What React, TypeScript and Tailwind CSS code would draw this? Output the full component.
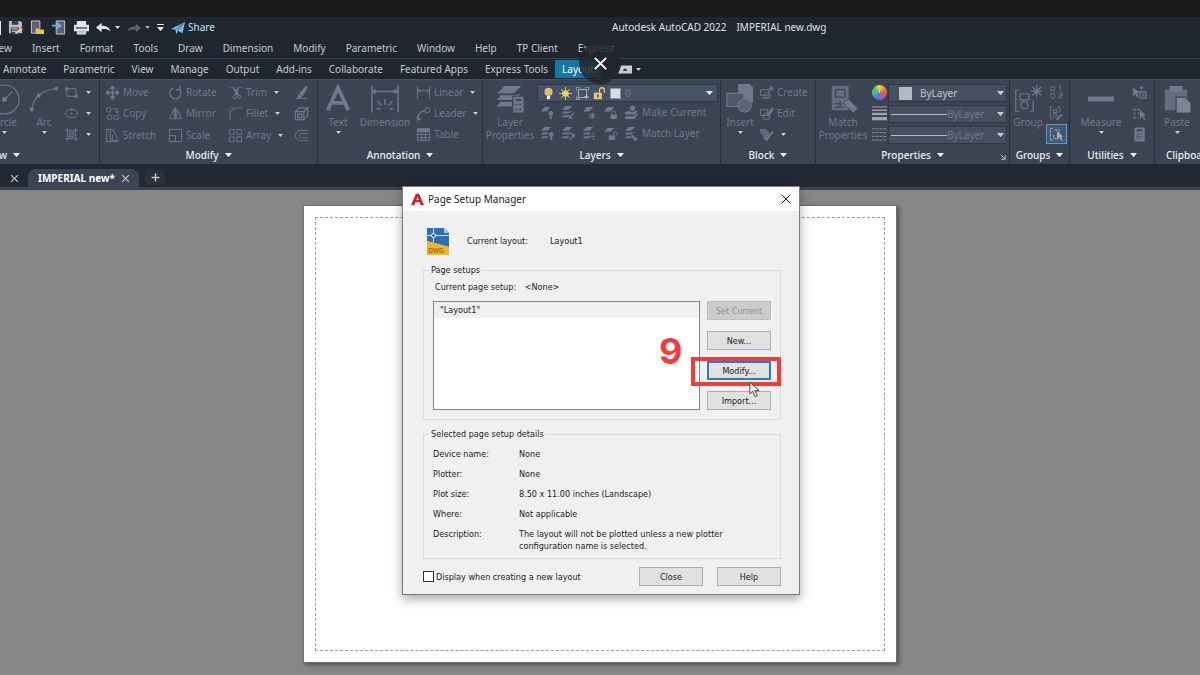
import type { ReactNode } from 'react'

const menus = ['View', 'Insert', 'Format', 'Tools', 'Draw', 'Dimension', 'Modify', 'Parametric', 'Window', 'Help', 'TP Client', 'Express']
const ribbonTabs = ['Annotate', 'Parametric', 'View', 'Manage', 'Output', 'Add-ins', 'Collaborate', 'Featured Apps', 'Express Tools']

const details = [
  { label: 'Device name:', value: 'None' },
  { label: 'Plotter:', value: 'None' },
  { label: 'Plot size:', value: '8.50 x 11.00 inches (Landscape)' },
  { label: 'Where:', value: 'Not applicable' },
  { label: 'Description:', value: 'The layout will not be plotted unless a new plotter configuration name is selected.' },
]

/* ---------- icons ---------- */

function Icon({ children, className = 'size-[15px]' }: { children: ReactNode; className?: string }) {
  return (
    <svg viewBox="0 0 16 16" fill="none" stroke="currentColor" className={`shrink-0 ${className}`} aria-hidden="true">
      {children}
    </svg>
  )
}

function Caret({ className = 'w-[5px] text-[#c9cdd4]' }: { className?: string }) {
  return (
    <svg viewBox="0 0 10 6" className={`shrink-0 ${className}`} aria-hidden="true">
      <path d="M0 0h10L5 6z" fill="currentColor" />
    </svg>
  )
}

const icons = {
  rect: <Icon><path d="M3 4h10v8H3z" /><path d="M1.500 2.500h3v3h-3zM11.500 10.500h3v3h-3z" fill="currentColor" stroke="none" /></Icon>,
  ellipse: <Icon><ellipse cx="8" cy="8" rx="6.500" ry="4.500" /><path d="M7 8h2M8 2.500v2M14 7v2" strokeWidth="1.500" /></Icon>,
  hatch: <Icon><path d="M3.500 1v14M12.500 1v14M1 3.500h14M1 12.500h14M6 6h4v4H6zM4 8l4-4M4 12l8-8M8 12l4-4" /></Icon>,
  move: <Icon><path d="M8 2v12M2 8h12M5.500 4L8 1.500 10.500 4M5.500 12L8 14.500l2.500-2.500M4 5.500L1.500 8 4 10.500M12 5.500L14.500 8 12 10.500" strokeWidth="1.600" /></Icon>,
  copy: <Icon><circle cx="4" cy="4" r="2.500" /><circle cx="5" cy="12" r="2.500" /><circle cx="12" cy="12" r="2.500" /><path d="M8.500 3h4.500v4M11 5.500l2 2 2-2" /></Icon>,
  stretch: <Icon><path d="M1.500 1.500h4v13h-4zM5.500 1.500h3l6 13h-9M8 7v6M6.500 11.500L8 13.500h4M10.500 12l2 1.500-2 1.500" /></Icon>,
  rotate: <Icon><path d="M11.500 4A6 6 0 1 1 6 3M12.500 1v4h-4" strokeWidth="1.400" /></Icon>,
  mirror: <Icon><path d="M6.500 3v10.500H1.500zM9.500 3v10.500h5zM8 1v14" /></Icon>,
  scale: <Icon><path d="M1.500 1.500h13v13h-13zM1.500 8h6.500v6.500" /></Icon>,
  trim: <Icon><path d="M1 2.500h6M10 2.500h5" strokeDasharray="2 1" /><path d="M6 3l5 8M11 3L8 11" strokeWidth="1.800" /><circle cx="7" cy="13" r="1.700" /><circle cx="12" cy="12.500" r="1.700" /></Icon>,
  fillet: <Icon><path d="M2 15V10a8 8 0 0 1 8-8h5" /><path d="M1 6V3M3 1.500h3" strokeDasharray="1 1" /></Icon>,
  array: <Icon><path d="M1.500 1.500h5v5h-5zM9.500 1.500h5v5h-5zM1.500 9.500h5v5h-5zM9.500 9.500h5v5h-5z" /></Icon>,
  erase: <Icon><path d="M6 9l7-8 1.500 1.500L9 11.500z" fill="currentColor" /><path d="M5 10l3 2.500-4 2z" fill="currentColor" /><path d="M2 14.500h12" /></Icon>,
  explode: <Icon><path d="M1.500 6h9v8.500h-9zM1.500 6l4-4h9l-4 4M14.500 2v8.500l-4 4M4 8.500h4v4H4z" strokeWidth="1.300" /></Icon>,
  offset: <Icon><path d="M15 2.500H7a5.500 5.500 0 0 0 0 11h8M15 6H8a2 2 0 0 0 0 4.500h7" /></Icon>,
  linear: <Icon><path d="M1.500 1v14M14.500 1v14M2 6h12M4.500 4L2 6l2.500 2M11.500 4L14 6l-2.500 2" /></Icon>,
  leader: <Icon><path d="M2 14c0-5 2-8 7-9M1 11l1 4 3-2" strokeWidth="1.300" /><circle cx="12" cy="4.500" r="2.700" /></Icon>,
  table: <Icon><path d="M1.500 2h13v12.500h-13zM1.500 8h13M1.500 11.500h13M6 5v9.500M10 5v9.500" /><path d="M1.500 2h13v3h-13z" fill="currentColor" /></Icon>,
  layerOff: <Icon><path d="M1 7l4-5h6L7 7z" fill="currentColor" stroke="none" /><circle cx="11.500" cy="9" r="2.500" fill="currentColor" stroke="none" /><path d="M11.500 11v4" strokeWidth="2" /></Icon>,
  layerIso: <Icon><path d="M1 5l4-4h7L8 5zM1 9l1.500-2H12L8 9zM1 13l1.500-2H9l-2 2z" fill="currentColor" stroke="none" /><path d="M14 8l-5 6M9 10.500V14h3.500" strokeWidth="1.300" /></Icon>,
  layerFreeze: <Icon><path d="M1 7l4-5h7L8 7z" fill="currentColor" stroke="none" /><path d="M11 8v7M7.800 9.500l6.400 4M14.200 9.500l-6.400 4" strokeWidth="1.300" /></Icon>,
  layerLock: <Icon><path d="M1 7l4-5h7L8 7zM8 10h7v5H8z" fill="currentColor" stroke="none" /><path d="M9.500 10V8.500a2 2 0 0 1 4 0V10" /></Icon>,
  layerCurrent: <Icon><path d="M1 8l3-2 5 2 4-2h2l-4 4H1zM1 12h9l3-3h2l-4 6H1z" fill="currentColor" stroke="none" /><circle cx="9" cy="3.500" r="2.800" fill="currentColor" stroke="none" /></Icon>,
  layerOn: <Icon><path d="M1 5l4-4h7L8 5zM1 9l1.500-2H9L8 9zM1 13l1.500-2H9l-1 2z" fill="currentColor" stroke="none" /><circle cx="12" cy="9" r="2.500" fill="currentColor" stroke="none" /><path d="M12 11v4" strokeWidth="2" /></Icon>,
  layerUniso: <Icon><path d="M1 5l4-4h7L8 5zM1 9l1.500-2H12L8 9zM1 13l1.500-2H9l-2 2z" fill="currentColor" stroke="none" /><path d="M9 15l5-6M10.500 9H14v3.500" strokeWidth="1.300" /></Icon>,
  layerThaw: <Icon><path d="M1 5l4-4h7L8 5zM1 9l1.500-2H9L8 9zM1 13l1.500-2H9l-1 2z" fill="currentColor" stroke="none" /><path d="M12 7v8M9 11h6" strokeWidth="1.300" strokeDasharray="2 1" /></Icon>,
  layerUnlock: <Icon><path d="M1 6l4-4h7L8 6zM6 10h7v5H6z" fill="currentColor" stroke="none" /><path d="M11 10V8.500a2 2 0 0 1 4 0V10" /></Icon>,
  layerMatch: <Icon><path d="M1 5l4-4h7L8 5zM1 9l1.500-2H12L8 9zM1 13l1.500-2H8l-1 2z" fill="currentColor" stroke="none" /><path d="M8 9l7 5-3 2-4-4z" fill="currentColor" stroke="none" /></Icon>,
  create: <Icon><path d="M1.500 5h9v6h-9zM2 14h9" /><circle cx="9" cy="11" r="3" /><path d="M13 1v6M10 4h6M11 2l4 4M15 2l-4 4" /></Icon>,
  edit: <Icon><path d="M1.500 4h8v6h-8z" /><circle cx="8" cy="11" r="3.500" /><path d="M9 9l5-7 1.500 1.500-5 7z" fill="currentColor" /></Icon>,
  attribs: <Icon><path d="M1 2h6l6 6-5 5-7-7z" fill="currentColor" stroke="none" opacity=".7" /><path d="M5 11l3 3 7-9" strokeWidth="2" /></Icon>,
  ungroup: <Icon><path d="M2 2h4v4H2zM12 1v5M10.500 2L12 1M11 9h3v2.500h-3V14h3" /><circle cx="4" cy="11.500" r="2.500" /></Icon>,
  groupEdit: <Icon><path d="M4 1H1.500v13H4M9 1h2.500v6M4.500 4h4v3h-4z" /><circle cx="6.500" cy="10" r="2" /><path d="M8 15l6-6" strokeWidth="2" /></Icon>,
  groupSelect: <Icon><path d="M4 1.500H1.500v13H4M6 3h5v3M5 8.500v4h3" strokeDasharray="3 1" /><path d="M8.500 4v10l2.500-3 2 4 1.500-1-2-3.500H15z" fill="currentColor" stroke="none" /></Icon>,
  quickSelect: <Icon><path d="M1 2v10l2.500-2.500 2 4 1.500-1L5.500 8.500H9z" fill="currentColor" stroke="none" /><path d="M8.500 7h6.500v7H8.500zM10.500 9.500h3M10.500 11.500h3M10 1v4M8 3h4" strokeWidth="1.300" /></Icon>,
  selectAll: <Icon><path d="M1 4h9M1 13h6M3 2v12M7 2v8" strokeDasharray="3 1" /><path d="M8.500 4v10l2.500-3 2 4 1.500-1-2-3.500H15z" fill="currentColor" stroke="none" /></Icon>,
  calc: <Icon><path d="M3 1h10v14H3z" fill="currentColor" /><path d="M5 3.500h6" stroke="#3b4453" strokeWidth="2" /><path d="M5 7.500h6M5 10h6M5 12.500h6" stroke="#3b4453" strokeDasharray="1.500 .8" /></Icon>,
}

/* ---------- ribbon pieces ---------- */

function Panel({ title, className, children }: { title: string; className: string; children: ReactNode }) {
  return (
    <section className={`flex flex-col shrink-0 border-r border-[#272d39] ${className}`}>
      <div className="flex flex-1 pt-0.5">{children}</div>
      <button className="flex h-[18px] w-full items-center justify-center gap-1.5 font-medium whitespace-nowrap text-[#eceef1]">
        {title}
        <Caret className="w-[7px] text-[#eceef1]" />
      </button>
    </section>
  )
}

function Tool({ icon, label, caret }: { icon: ReactNode; label?: string; caret?: boolean }) {
  return (
    <button className="flex h-[21px] items-center gap-[3px] whitespace-nowrap" aria-label={label ?? 'Tool'}>
      {icon}
      {label}
      {caret && <Caret className="ml-1 w-[5px] text-[#c9cdd4]" />}
    </button>
  )
}

function BigTool({ icon, label, caret, className }: { icon: ReactNode; label: string; caret?: boolean; className: string }) {
  return (
    <button className={`flex flex-col items-center shrink-0 leading-[13px] ${className}`}>
      <span className="flex h-[34px] items-center justify-center">{icon}</span>
      <span>{label}</span>
      {caret && <Caret className="mt-0.5 w-[5px] text-[#c9cdd4]" />}
    </button>
  )
}

function QuickAccess() {
  return (
    <div className="flex items-center gap-[7px] text-[#e3e5e8]">
      <span className="h-3.5 w-px bg-[#e3e5e8]" />
      <button aria-label="Save as">
        <Icon className="size-[15px]">
          <path d="M1 1h12l2 2v11H1z" fill="#b9bdc4" stroke="none" />
          <path d="M4 1h7v4H4zM3 8h9v6H3z" fill="#3a404b" stroke="none" />
          <path d="M4 9.500h6M4 12h5" stroke="#e3e5e8" />
          <path d="M7 14l6-6 2.500 2-6 5z" fill="#f0c987" stroke="none" />
          <path d="M13 8l1-1 2 2-.5 1z" fill="#d9534f" stroke="none" />
        </Icon>
      </button>
      <button aria-label="Open from web">
        <Icon className="size-[15px]">
          <path d="M1.500 1h9v13h-9z" fill="#5b626e" stroke="#c9ccd1" />
          <path d="M6 9h3l1 1h5v5H6z" fill="#e9bf62" stroke="none" />
        </Icon>
      </button>
      <button aria-label="Save to web">
        <Icon className="size-[15px]">
          <path d="M4.500 1h9v14h-9z" fill="#5b626e" stroke="#c9ccd1" />
          <path d="M0 6h7M5 3l4 3-4 3" stroke="#6cb4ee" strokeWidth="2" />
        </Icon>
      </button>
      <button aria-label="Plot">
        <Icon className="size-[15px]">
          <path d="M3 1h10v4H3zM0 5h16v7H0z" fill="#e3e5e8" stroke="none" />
          <path d="M2 8.500h12" stroke="#4a515e" strokeWidth="1.500" />
          <path d="M3.500 10.500h9v4.500h-9z" fill="#9bd0f0" stroke="#e3e5e8" />
        </Icon>
      </button>
      <button aria-label="Undo" className="flex items-center gap-1">
        <Icon className="size-[15px]"><path d="M0 8l6-5v3.200c5 0 8 1.500 9.500 5.800C13 9.800 10 9.500 6 9.700V13z" fill="currentColor" stroke="none" /></Icon>
        <Caret className="w-[5px] text-[#e3e5e8]" />
      </button>
      <button aria-label="Redo" className="flex items-center gap-1 text-[#5b616c]">
        <Icon className="size-[14px]"><path d="M16 8l-6-5v3.200c-5 0-8 1.500-9.500 5.800C3 9.800 6 9.500 10 9.700V13z" fill="currentColor" stroke="none" /></Icon>
        <Caret className="w-[5px] text-[#a3a8b1]" />
      </button>
      <button aria-label="Customize" className="flex flex-col items-center gap-0.5">
        <span className="h-px w-[7px] bg-[#e3e5e8]" />
        <Caret className="w-[7px] text-[#e3e5e8]" />
      </button>
      <a href="#share" className="flex items-center gap-[3px] text-[#b9e3fb]">
        <Icon className="size-[14px]"><path d="M0 9L16 1l-3 13-5-3-2 4-1-5z" fill="#7cc0f2" stroke="none" /><path d="M5 10l9-7-6 8" stroke="#2a5f8c" /></Icon>
        Share
      </a>
    </div>
  )
}

function LineCombo({ name }: { name: string }) {
  return (
    <div className="flex h-[18px] items-center border border-[#2f3644] bg-[#464f60] pr-0.5">
      <span className="ml-0.5 h-px w-14 bg-[#b6bac2]" />
      <select aria-label={name} className="min-w-0 flex-1 appearance-none">
        <option>ByLayer</option>
      </select>
      <Caret className="w-[7px] text-[#c9cdd4]" />
    </div>
  )
}

function Ribbon() {
  return (
    <div className="flex h-[85px] overflow-hidden border-t border-[#4a5262] bg-[#3b4453] text-[#70788a]">
      <Panel title="Draw" className="-ml-8 w-[132px] [&>button]:justify-start [&>button]:pl-3.5">
        <BigTool className="ml-5 w-8" caret label="Circle" icon={
          <Icon className="size-[31px]"><circle cx="8" cy="8" r="7.500" strokeWidth=".6" /><path d="M8 8l4-4" strokeWidth=".6" /><circle cx="8" cy="8" r=".8" fill="currentColor" /></Icon>
        } />
        <BigTool className="ml-2 w-8" caret label="Arc" icon={
          <Icon className="size-[28px]"><path d="M1 14C2 7 6 3 15 2" strokeWidth=".6" /><path d="M0 13h2v2H0zM4 5h2v2H4zM14 1h2v2h-2z" fill="currentColor" stroke="none" /></Icon>
        } />
        <div className="ml-1">
          <Tool icon={icons.rect} caret />
          <Tool icon={icons.ellipse} caret />
          <Tool icon={icons.hatch} caret />
        </div>
      </Panel>

      <Panel title="Modify" className="w-[218px]">
        <div className="grid grid-cols-[63px_60px_66px_15px] pl-[5px]">
          <Tool icon={icons.move} label="Move" />
          <Tool icon={icons.rotate} label="Rotate" />
          <Tool icon={icons.trim} label="Trim" caret />
          <Tool icon={icons.erase} />
          <Tool icon={icons.copy} label="Copy" />
          <Tool icon={icons.mirror} label="Mirror" />
          <Tool icon={icons.fillet} label="Fillet" caret />
          <Tool icon={icons.explode} />
          <Tool icon={icons.stretch} label="Stretch" />
          <Tool icon={icons.scale} label="Scale" />
          <Tool icon={icons.array} label="Array" caret />
          <Tool icon={icons.offset} />
        </div>
      </Panel>

      <Panel title="Annotation" className="w-[165px]">
        <BigTool className="w-10" caret label="Text" icon={
          <Icon className="size-[30px]"><path d="M2.500 14L8 2l5.500 12M4.500 10h7" strokeWidth="2" /></Icon>
        } />
        <BigTool className="w-[54px]" label="Dimension" icon={
          <Icon className="size-[30px]"><path d="M1 1v14M15 1v14M1.500 4h13M3 3L1.500 4 3 5M13 3l1.500 1L13 5M8 8v3M4 9l2 2.500M12 9l-2 2.500M3.500 13l2 .5M12.500 13l-2 .5" strokeWidth=".8" /></Icon>
        } />
        <div className="ml-1">
          <Tool icon={icons.linear} label="Linear" caret />
          <Tool icon={icons.leader} label="Leader" caret />
          <Tool icon={icons.table} label="Table" />
        </div>
      </Panel>

      <Panel title="Layers" className="w-[238px]">
        <BigTool className="w-[54px]" label="Layer Properties" icon={
          <Icon className="size-[30px]"><path d="M1 5l4-4h9l-4 4zM1 8.500L3 6h8l3-1-4 3.500zM1 12l2-2.500h6V12z" fill="currentColor" stroke="none" /><path d="M9.500 6.500h6v9h-6z" fill="currentColor" stroke="#3b4453" strokeWidth=".6" /><path d="M11 8.500h3M11 11h1M13 11h1M11 13.500h1M13 13.500h1" stroke="#3b4453" /></Icon>
        } />
        <div className="mr-0.5 min-w-0 flex-1">
          <div className="mt-0.5 flex h-[18px] items-center gap-1 border border-[#2f3644] bg-[#465267] px-1">
            <Icon className="size-[13px]"><circle cx="8" cy="6" r="5" fill="#e9b877" stroke="none" /><path d="M6 11h4v4H6z" fill="#e6e6e6" stroke="none" /></Icon>
            <Icon className="size-[13px]"><circle cx="8" cy="8" r="4" fill="#f2cf63" stroke="none" /><path d="M8 0v16M0 8h16M2.500 2.500l11 11M13.500 2.500l-11 11" stroke="#f2cf63" /></Icon>
            <Icon className="size-[13px]"><path d="M3 3h10v10H3z" stroke="#c9ced6" /><path d="M0 5V0h5M11 0h5v5M0 11v4h5M13 9v6M10 12h6" stroke="#c9ced6" /></Icon>
            <Icon className="size-[13px]"><path d="M1 7h10v8H1z" fill="#e6c777" stroke="none" /><path d="M8 7V4a3 3 0 0 1 6 0v3" stroke="#e6c777" strokeWidth="1.700" /><path d="M6 9v4" stroke="#465267" strokeWidth="1.700" /></Icon>
            <span className="size-[11px] border border-[#8e95a1] bg-[#dadce2]" />
            <select aria-label="Layer" className="min-w-0 flex-1 appearance-none">
              <option>0</option>
            </select>
            <Caret className="w-[7px] text-[#dfe2e6]" />
          </div>
          <div className="flex gap-1.5 pl-[3px]">
            <Tool icon={icons.layerOff} />
            <Tool icon={icons.layerIso} />
            <Tool icon={icons.layerFreeze} />
            <Tool icon={icons.layerLock} />
            <Tool icon={icons.layerCurrent} label="Make Current" />
          </div>
          <div className="flex gap-1.5 pl-[3px]">
            <Tool icon={icons.layerOn} />
            <Tool icon={icons.layerUniso} />
            <Tool icon={icons.layerThaw} />
            <Tool icon={icons.layerUnlock} />
            <Tool icon={icons.layerMatch} label="Match Layer" />
          </div>
        </div>
      </Panel>

      <Panel title="Block" className="w-[95px]">
        <BigTool className="w-[38px]" caret label="Insert" icon={
          <Icon className="size-[30px]"><path d="M7 0h6l2 2v8H7z" fill="currentColor" stroke="none" /><path d="M1 5h9v7H1z" fill="#4f586a" strokeWidth=".6" /><circle cx="10.500" cy="11.500" r="3.500" fill="#5a6375" strokeWidth=".6" /></Icon>
        } />
        <div>
          <Tool icon={icons.create} label="Create" />
          <Tool icon={icons.edit} label="Edit" />
          <Tool icon={icons.attribs} caret />
        </div>
      </Panel>

      <Panel title="Properties" className="w-[194px]">
        <BigTool className="w-[54px]" label="Match Properties" icon={
          <Icon className="size-[30px]"><path d="M2 1h9v13H2z" fill="#656d7e" stroke="none" /><path d="M4 3h5v4H4zM3.500 10.500h3M6.500 9v3M3.500 12.500h5" strokeWidth=".7" stroke="#3b4453" /><path d="M8 10l3-2 5 5-2.500 2.500z" fill="currentColor" stroke="#3b4453" strokeWidth=".4" /></Icon>
        } />
        <div className="flex w-[18px] flex-col items-center">
          <span className="flex h-[21px] items-center">
            <span className="size-[15px] rounded-full bg-[conic-gradient(#f0d545,#f08a3c,#e0524d,#b45ac0,#4a74e0,#3fb8d8,#56c264,#f0d545)]" />
          </span>
          <span className="flex h-[21px] items-center text-[#9da3ae]"><Icon><path d="M0 1h16" /><path d="M0 4.500h16" strokeWidth="1.500" /><path d="M0 8.500h16" strokeWidth="2.500" /><path d="M0 13.500h16" strokeWidth="3.500" /></Icon></span>
          <span className="flex h-[21px] items-center text-[#8d94a1]"><Icon><path d="M0 2h16M0 6h16M0 10h16M0 14h16" strokeDasharray="3 1" /></Icon></span>
        </div>
        <div className="flex min-w-0 flex-1 flex-col gap-[3px] pt-0.5 pr-0.5">
          <div className="flex h-[18px] items-center gap-2 border border-[#2f3644] bg-[#464f60] pr-0.5 pl-2.5 text-[#c0c4cc]">
            <span className="size-[13px] bg-[#b4b8c1]" />
            <select aria-label="Object color" className="min-w-0 flex-1 appearance-none">
              <option>ByLayer</option>
            </select>
            <Caret className="w-[7px] text-[#c9cdd4]" />
          </div>
          <LineCombo name="Lineweight" />
          <LineCombo name="Linetype" />
        </div>
        <button aria-label="Properties settings" className="-ml-3 flex w-3 items-end justify-center text-[#c9cdd4] [&>svg]:-mb-3.5">
          <Icon className="size-[6px]"><path d="M2 2l10 10M14 4v10H4" strokeWidth="2.500" /></Icon>
        </button>
      </Panel>

      <Panel title="Groups" className="w-[60px]">
        <BigTool className="w-9" label="Group" icon={
          <Icon className="size-[28px]"><path d="M3 3H1v12h2M9 15h2V9M3.500 5h5v3.500h-5zM13 0v7M9.500 3.500h7M10.500 1l5 5M15.500 1l-5 5" strokeWidth=".7" /><circle cx="6" cy="11.500" r="2" strokeWidth=".7" /></Icon>
        } />
        <div className="flex flex-col items-center">
          <Tool icon={icons.ungroup} />
          <Tool icon={icons.groupEdit} />
          <div className="border border-[#4a9fd4] bg-[#44596f] px-0.5 text-[#a8b0bc] [&>button]:h-[18px]">
            <Tool icon={icons.groupSelect} />
          </div>
        </div>
      </Panel>

      <Panel title="Utilities" className="w-[85px]">
        <BigTool className="w-[62px]" caret label="Measure" icon={
          <Icon className="size-[26px]"><path d="M0 6.500h16v3H0z" fill="currentColor" stroke="none" /></Icon>
        } />
        <div>
          <Tool icon={icons.quickSelect} />
          <Tool icon={icons.selectAll} />
          <Tool icon={icons.calc} />
        </div>
      </Panel>

      <Panel title="Clipboard" className="w-20 [&>button]:justify-start [&>button]:pl-[11px]">
        <BigTool className="w-11" caret label="Paste" icon={
          <Icon className="size-[30px]"><path d="M1.500 3h12v11h-12z" fill="#656d7e" stroke="none" /><path d="M4.500 1.500h6v2.500h-6z" fill="currentColor" /><path d="M7.500 7h5l3 3v5.500h-8z" fill="#7d8594" stroke="#3b4453" strokeWidth=".6" /></Icon>
        } />
      </Panel>
    </div>
  )
}

/* ---------- dialog ---------- */

const dialogButton = 'h-[19px] w-16 border border-[#adadad] bg-[#e1e1e1] text-[#1c1c1c]'

function PageSetupDialog() {
  return (
    <div
      role="dialog"
      aria-labelledby="dialog-title"
      className="absolute top-[186px] left-1/2 w-[398px] -translate-x-[198px] border border-[#7b7b7b] bg-[#f0f0f0] pb-2 font-['DejaVu_Sans_Condensed','DejaVu_Sans',sans-serif] text-[9px] leading-[14px] text-[#1c1c1c] shadow-[0_4px_10px_rgba(0,0,0,0.35)]"
    >
      <header className="flex h-6 items-center bg-white px-2">
        <Icon className="size-[13px]"><path d="M0 15L6 1h4l6 14h-4l-1.300-3.500H5.500L4 15zM6.500 8.500h3.200L8 4.500z" fill="#c0242f" stroke="none" /></Icon>
        <h1 id="dialog-title" className="ml-1 font-['Noto_Sans',sans-serif] text-[10px]">Page Setup Manager</h1>
        <button aria-label="Close dialog" className="ml-auto">
          <Icon className="size-[10px]"><path d="M1 1l14 14M15 1L1 15" strokeWidth="1.600" /></Icon>
        </button>
      </header>

      <div className="pr-[18px] pl-5">
        <div className="flex h-[52px] items-center pt-2 pl-1">
          <svg viewBox="0 0 22 27" className="w-[22px]" aria-hidden="true">
            <path d="M0 0h17l5 5v14L0 13z" fill="#2b6fb5" />
            <path d="M17 0l5 5h-5z" fill="#9cc4e6" />
            <path d="M0 13l22 6v8H0z" fill="#f2b526" />
            <path d="M0 7.500h22M6.500 0v14" stroke="#cfe3f5" />
            <circle cx="6.500" cy="7.500" r="2" fill="#2b6fb5" stroke="#fff" />
            <text x="1" y="25" fontSize="7" fill="#7a5310">DWG</text>
          </svg>
          <span className="ml-[18px] w-[83px]">Current layout:</span>
          <span>Layout1</span>
        </div>

        <fieldset className="border border-[#dcdcdc] px-[9px] pb-[9px]">
          <legend className="-ml-1 px-0.5">Page setups</legend>
          <p className="mt-[3px] mb-[7px] pl-0.5">
            Current page setup: <span className="ml-1.5">&lt;None&gt;</span>
          </p>
          <div className="flex justify-between">
            <ul role="listbox" aria-label="Page setups" className="h-[109px] w-[267px] border border-[#82858b] bg-white">
              <li role="option" aria-selected="true" className="h-4 bg-[#efefef] pl-1.5 leading-4">"Layout1"</li>
            </ul>
            <div className="flex flex-col justify-between">
              <button disabled className="h-[19px] w-16 border border-[#bfbfbf] bg-[#cccccc] text-[#8f8f8f]">Set Current</button>
              <button className={dialogButton}>New...</button>
              <div className="relative">
                <button className="block h-[19px] w-16 border-2 border-[#2a7ac4] bg-[#e1e1e1]">Modify...</button>
                {/* step marker */}
                <span className="pointer-events-none absolute -top-1 -left-4 h-[29px] w-[90px] border-4 border-[#ee3e3e]" />
                <span className="pointer-events-none absolute -top-7 -left-12 font-['Inter',sans-serif] text-4xl leading-9 font-bold text-[#f53b3b]">9</span>
                <svg viewBox="0 0 12 18" className="pointer-events-none absolute top-5 left-[42px] z-10 w-[11px]" aria-hidden="true">
                  <path d="M1 1v13l3-3 2.500 6 2.500-1-2.500-5.500H11z" fill="#fff" stroke="#333" />
                </svg>
              </div>
              <button className={dialogButton}>Import...</button>
            </div>
          </div>
        </fieldset>

        <fieldset className="mt-[7px] border border-[#dcdcdc] px-[9px] pb-1.5">
          <legend className="-ml-1 px-0.5">Selected page setup details</legend>
          <dl className="mt-[7px] grid grid-cols-[86px_1fr] gap-y-2 leading-3">
            {details.map(d => (
              <div key={d.label} className="contents">
                <dt>{d.label}</dt>
                <dd className="max-w-[220px]">{d.value}</dd>
              </div>
            ))}
          </dl>
        </fieldset>

        <footer className="mt-2 flex items-center">
          <input id="show-on-new" type="checkbox" className="size-[11px] appearance-none border border-[#333] bg-white" />
          <label htmlFor="show-on-new" className="ml-0.5">Display when creating a new layout</label>
          <button className={`${dialogButton} ml-auto`}>Close</button>
          <button className={`${dialogButton} ml-3.5`}>Help</button>
        </footer>
      </div>
    </div>
  )
}

export default function App() {
  return (
    <div className="relative flex min-h-screen flex-col overflow-hidden bg-[#868686] font-['Noto_Sans',sans-serif] text-[10px] text-[#c5c9d0]">
      <div className="h-[17px] bg-[#17191b]" />

      <header className="flex h-[21px] items-center bg-[#20262f]">
        <div className="w-[51%]"><QuickAccess /></div>
        <p className="flex gap-2.5 text-[#dfe2e6]">
          <span>Autodesk AutoCAD 2022</span>
          <span>IMPERIAL new.dwg</span>
        </p>
      </header>

      <nav className="-ml-2.5 flex h-[21px] items-center gap-5 border-b border-[#3a414d] bg-[#20262f] whitespace-nowrap">
        {menus.map(m => <a key={m} href="#menu">{m}</a>)}
      </nav>

      <nav className="flex h-5 items-center gap-[17px] bg-[#20262f] pl-[3px] whitespace-nowrap">
        {ribbonTabs.map(t => <a key={t} href="#tab">{t}</a>)}
        <a href="#layout" className="-ml-2.5 flex h-[18px] items-center bg-[#1377a3] px-[7px] text-white">Layout</a>
        <button aria-label="Minimize ribbon" className="flex items-center gap-1">
          <Icon className="size-[14px]"><path d="M3 4h13v9H0z" fill="#c9cdd4" stroke="none" /><path d="M5 10l3-3 3 3z" fill="#20262f" stroke="none" /></Icon>
          <Caret className="w-[5px] text-[#c9cdd4]" />
        </button>
      </nav>

      <Ribbon />

      <div className="flex h-[26px] items-stretch border-b-[3px] border-[#3b4453] bg-[#222834] pt-[5px]">
        <button aria-label="Close tab" className="ml-2.5 w-[18px]"><Icon className="size-[9px]"><path d="M2 2l12 12M14 2L2 14" strokeWidth="2" /></Icon></button>
        <div className="flex w-[111px] items-center gap-1.5 rounded-t-lg bg-[#3b4453] pl-2.5 font-bold whitespace-nowrap text-white">
          IMPERIAL new*
          <button aria-label="Close drawing" className="text-[#c5c9d0]"><Icon className="size-[9px]"><path d="M2 2l12 12M14 2L2 14" strokeWidth="2" /></Icon></button>
        </div>
        <button aria-label="New tab" className="mt-px mb-0.5 ml-1.5 flex w-5 items-center justify-center rounded bg-[#2b323e]"><Icon className="size-[9px]"><path d="M8 1v14M1 8h14" strokeWidth="2.500" /></Icon></button>
      </div>

      <main className="flex flex-1 justify-center pt-[15px] pb-3">
        <div className="flex w-[49.5%] border border-[#707070] bg-white p-[11px] shadow-[2px_2px_4px_rgba(0,0,0,0.4)]">
          <div className="flex-1 border border-dashed border-[#9a9a9a]" />
        </div>
      </main>

      <PageSetupDialog />

      <button aria-label="Close" className="absolute top-[42px] left-1/2 flex size-[42px] -translate-x-1/2 items-center justify-center rounded-full bg-[#22262d]/85 text-white">
        <Icon className="size-[13px]"><path d="M1 1l14 14M15 1L1 15" strokeWidth="2.200" /></Icon>
      </button>
    </div>
  )
}
